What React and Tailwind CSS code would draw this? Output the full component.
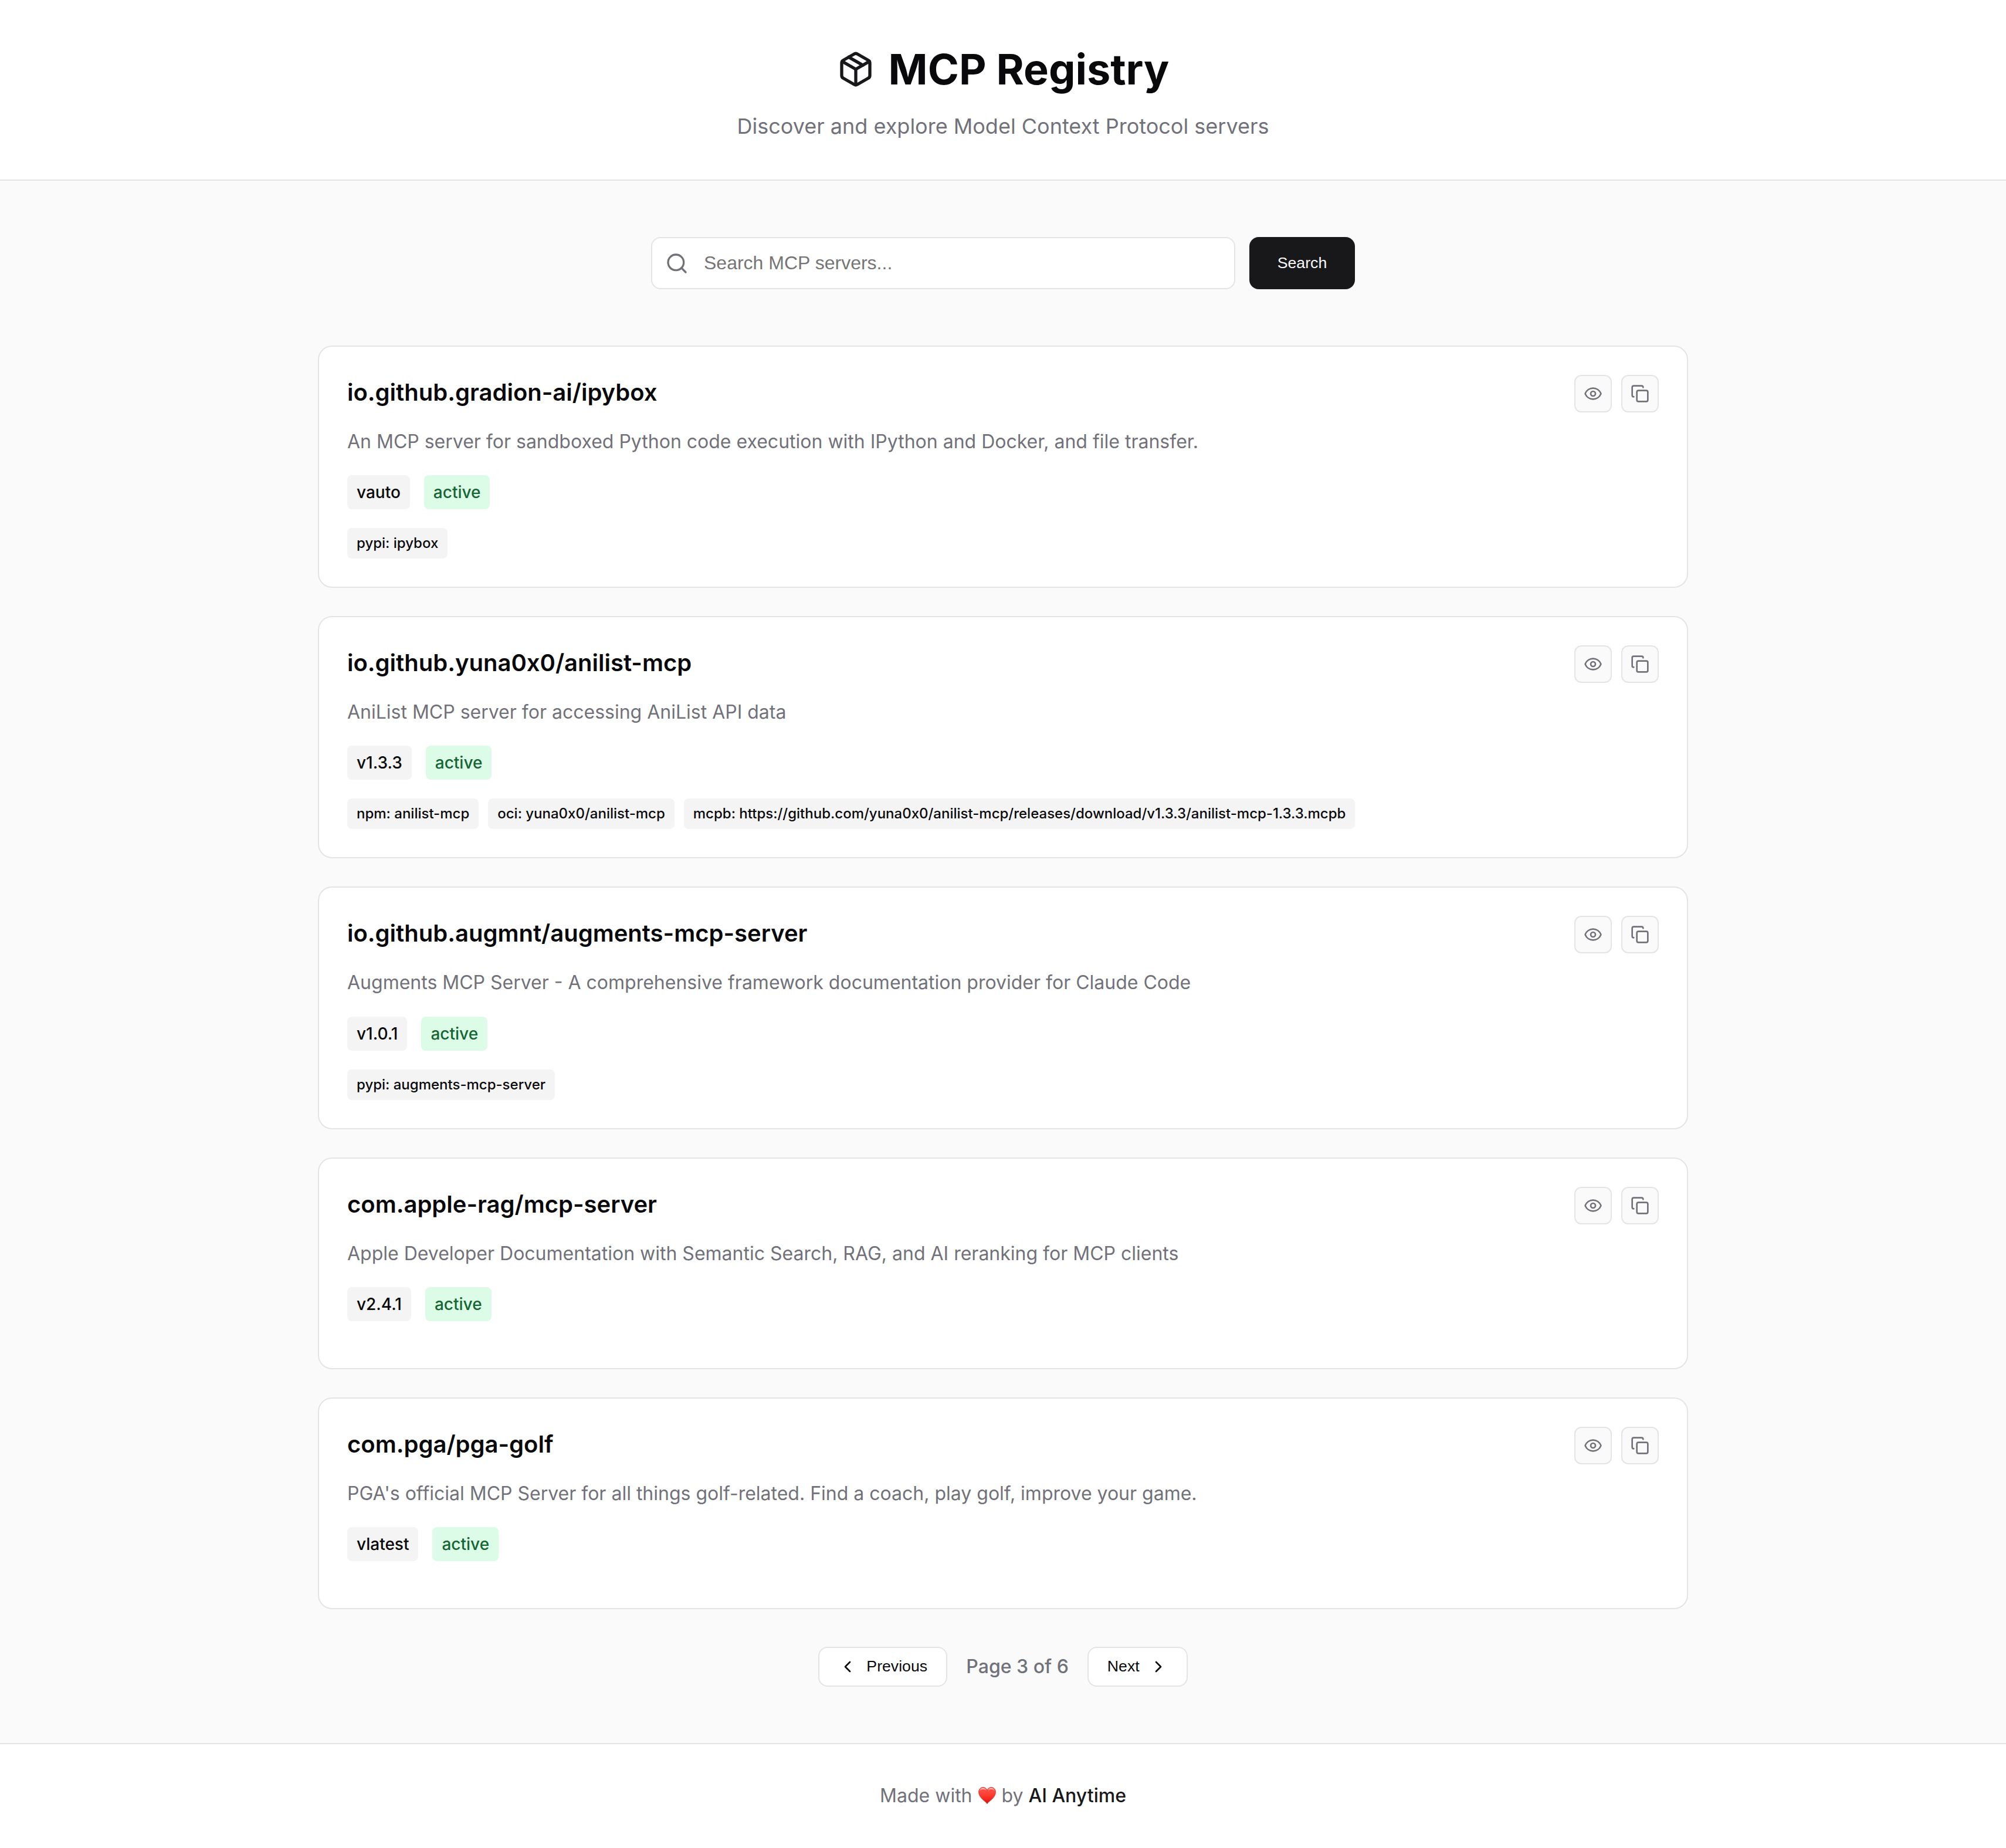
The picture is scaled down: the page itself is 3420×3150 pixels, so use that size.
import React from "react";
import { Package, Search, Eye, Copy, ChevronLeft, ChevronRight } from "lucide-react";

const servers = [
  {
    name: "io.github.gradion-ai/ipybox",
    description: "An MCP server for sandboxed Python code execution with IPython and Docker, and file transfer.",
    version: "vauto",
    packages: ["pypi: ipybox"],
  },
  {
    name: "io.github.yuna0x0/anilist-mcp",
    description: "AniList MCP server for accessing AniList API data",
    version: "v1.3.3",
    packages: [
      "npm: anilist-mcp",
      "oci: yuna0x0/anilist-mcp",
      "mcpb: https://github.com/yuna0x0/anilist-mcp/releases/download/v1.3.3/anilist-mcp-1.3.3.mcpb",
    ],
  },
  {
    name: "io.github.augmnt/augments-mcp-server",
    description: "Augments MCP Server - A comprehensive framework documentation provider for Claude Code",
    version: "v1.0.1",
    packages: ["pypi: augments-mcp-server"],
  },
  {
    name: "com.apple-rag/mcp-server",
    description: "Apple Developer Documentation with Semantic Search, RAG, and AI reranking for MCP clients",
    version: "v2.4.1",
    packages: [],
  },
  {
    name: "com.pga/pga-golf",
    description: "PGA's official MCP Server for all things golf-related. Find a coach, play golf, improve your game.",
    version: "vlatest",
    packages: [],
  },
];

function Heart() {
  return (
    <svg viewBox="0 0 30 29" className="mx-[1px] inline-block h-[29px] w-[30px] align-[-3px]" aria-hidden="true">
      <defs>
        <linearGradient id="heartFill" x1="0" y1="0" x2="0" y2="1">
          <stop offset="0" stopColor="#ff5a4e" />
          <stop offset="0.4" stopColor="#ff4136" />
          <stop offset="0.7" stopColor="#f92a20" />
          <stop offset="1" stopColor="#c8100c" />
        </linearGradient>
        <linearGradient id="heartGloss" x1="0" y1="0" x2="0" y2="1">
          <stop offset="0" stopColor="#ffffff" stopOpacity="0.75" />
          <stop offset="1" stopColor="#ffffff" stopOpacity="0" />
        </linearGradient>
      </defs>
      <path
        d="M15 28.6C13.2 24.8 0.6 18.6 0.6 8.8C0.6 3.9 3.8 0.6 7.9 0.6C11.2 0.6 13.9 2.5 15 5.6C16.1 2.5 18.8 0.6 22.1 0.6C26.2 0.6 29.4 3.9 29.4 8.8C29.4 18.6 16.8 24.8 15 28.6Z"
        fill="url(#heartFill)"
        stroke="#d3251c"
        strokeWidth="0.8"
      />
      <path d="M2 7.6C2.2 3.8 4.8 1.7 8 1.7C11 1.7 13.2 3.6 14 6.6C12.4 4.6 10.4 3.9 8 3.9C5.2 3.9 3.2 5 2 7.6Z" fill="url(#heartGloss)" />
      <path d="M16 6.6C16.8 3.6 19 1.7 22 1.7C25.2 1.7 27.8 3.8 28 7.6C26.8 5 24.8 3.9 22 3.9C19.6 3.9 17.6 4.6 16 6.6Z" fill="url(#heartGloss)" />
    </svg>
  );
}

function IconButton({ label, children }) {
  return (
    <button
      aria-label={label}
      className="flex size-16 items-center justify-center rounded-xl border-2 border-[#e4e4e4] bg-[#fafafa] text-[#71717a]"
    >
      {children}
    </button>
  );
}

function ServerCard({ server }) {
  return (
    <article className="rounded-3xl border-2 border-[#e4e4e4] bg-white p-12">
      <div className="mb-6 flex items-start justify-between">
        <h3 className="text-[40px] leading-[59px] font-semibold text-[#09090b]">{server.name}</h3>
        <div className="flex gap-4">
          <IconButton label="View details">
            <Eye size={32} />
          </IconButton>
          <IconButton label="Copy">
            <Copy size={32} />
          </IconButton>
        </div>
      </div>
      <p className="mb-8 text-[32px] leading-[51.2px] text-[#71717a]">{server.description}</p>
      <div className="mb-8 flex gap-6 text-[28px] leading-[42px] font-medium">
        <span className="rounded-lg bg-[#f4f4f4] px-4 py-2 text-[#09090b]">{server.version}</span>
        <span className="rounded-lg bg-[#dcfce7] px-4 py-2 text-[#166534]">active</span>
      </div>
      <div className="flex gap-4">
        {server.packages.map((pkg) => (
          <span key={pkg} className="rounded-lg bg-[#f4f4f4] px-4 pt-2 pb-[9px] text-[24px] leading-[35px] font-medium text-[#09090b]">
            {pkg}
          </span>
        ))}
      </div>
    </article>
  );
}

export default function App() {
  return (
    <div className="flex min-h-screen flex-col bg-[#fafafa] font-['Inter',sans-serif] text-[#09090b] antialiased">
      <header className="border-b-2 border-[#e4e4e4] bg-white py-16 text-center">
        <div className="mb-4 flex items-center justify-center gap-6">
          <Package size={64} className="text-[#18181b]" />
          <h1 className="pb-px text-[72px] leading-[107px] font-bold">MCP Registry</h1>
        </div>
        <p className="text-[36px] leading-[54px] text-[#71717a]">Discover and explore Model Context Protocol servers</p>
      </header>

      <main className="mx-auto w-[2336px] grow py-24">
        <div className="mx-auto mb-24 flex w-[1200px] gap-6">
          <div className="flex h-[89px] grow items-center gap-[26px] rounded-2xl border-2 border-[#e4e4e4] bg-white px-[22px]">
            <Search size={40} className="shrink-0 text-[#71717a]" />
            <input
              placeholder="Search MCP servers..."
              className="w-full pb-px font-['Liberation_Sans',sans-serif] text-[32px] leading-[36px] outline-none placeholder:text-[#757575]"
            />
          </div>
          <button className="w-[180px] rounded-2xl bg-[#18181b] pb-[2px] font-['Liberation_Sans',sans-serif] text-[26.667px] text-[#fafafa]">
            Search
          </button>
        </div>

        <div className="flex flex-col gap-12">
          {servers.map((server) => (
            <ServerCard key={server.name} server={server} />
          ))}
        </div>

        <nav className="mt-16 flex items-center justify-center gap-8">
          <button className="flex h-[68px] w-[220px] items-center gap-4 rounded-2xl border-2 border-[#e4e4e4] bg-white px-8 font-['Liberation_Sans',sans-serif] text-[26.667px]">
            <ChevronLeft size={32} className="shrink-0" />
            <span className="pb-[2px]">Previous</span>
          </button>
          <span className="pb-px text-[32px] leading-[47px] font-medium text-[#71717a]">Page 3 of 6</span>
          <button className="flex h-[68px] items-center gap-4 rounded-2xl border-2 border-[#e4e4e4] bg-white px-8 font-['Liberation_Sans',sans-serif] text-[26.667px]">
            <span className="pb-[2px]">Next</span>
            <ChevronRight size={32} />
          </button>
        </nav>
      </main>

      <footer className="h-[179px] border-t-2 border-[#e4e4e4] bg-white pt-16 text-center">
        <p className="text-[32px] leading-[47px] text-[#71717a]">
          Made with <Heart /> by <a className="font-medium text-[#18181b]">AI Anytime</a>
        </p>
      </footer>
    </div>
  );
}
